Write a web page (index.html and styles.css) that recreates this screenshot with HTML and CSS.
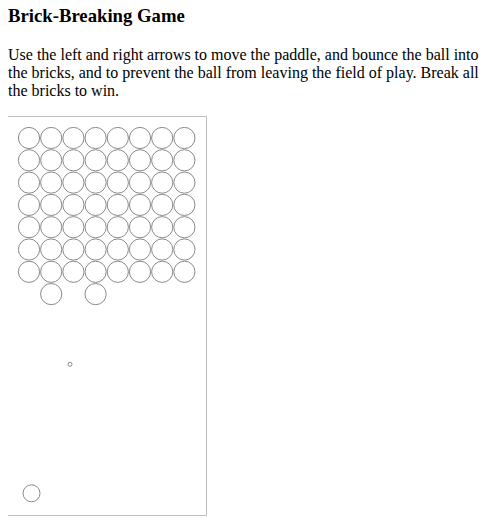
FILE: index.html
```html
<!DOCTYPE html>
<html>
<head>
<meta charset="utf-8">
<link rel="stylesheet" href="styles.css">
</head>
<body>
<h3 class="title">Brick-Breaking Game</h3>
<p class="intro">Use the left and right arrows to move the paddle, and bounce the ball into the bricks, and to prevent the ball from leaving the field of play. Break all the bricks to win.</p>
<svg class="field" width="198" height="398" viewBox="0 0 198 398">
  <g class="bricks">
    <circle cx="21" cy="21" r="10.6"/><circle cx="43.2" cy="21" r="10.6"/><circle cx="65.4" cy="21" r="10.6"/><circle cx="87.6" cy="21" r="10.6"/><circle cx="109.8" cy="21" r="10.6"/><circle cx="132" cy="21" r="10.6"/><circle cx="154.2" cy="21" r="10.6"/><circle cx="176.4" cy="21" r="10.6"/>
    <circle cx="21" cy="43.3" r="10.6"/><circle cx="43.2" cy="43.3" r="10.6"/><circle cx="65.4" cy="43.3" r="10.6"/><circle cx="87.6" cy="43.3" r="10.6"/><circle cx="109.8" cy="43.3" r="10.6"/><circle cx="132" cy="43.3" r="10.6"/><circle cx="154.2" cy="43.3" r="10.6"/><circle cx="176.4" cy="43.3" r="10.6"/>
    <circle cx="21" cy="65.6" r="10.6"/><circle cx="43.2" cy="65.6" r="10.6"/><circle cx="65.4" cy="65.6" r="10.6"/><circle cx="87.6" cy="65.6" r="10.6"/><circle cx="109.8" cy="65.6" r="10.6"/><circle cx="132" cy="65.6" r="10.6"/><circle cx="154.2" cy="65.6" r="10.6"/><circle cx="176.4" cy="65.6" r="10.6"/>
    <circle cx="21" cy="87.9" r="10.6"/><circle cx="43.2" cy="87.9" r="10.6"/><circle cx="65.4" cy="87.9" r="10.6"/><circle cx="87.6" cy="87.9" r="10.6"/><circle cx="109.8" cy="87.9" r="10.6"/><circle cx="132" cy="87.9" r="10.6"/><circle cx="154.2" cy="87.9" r="10.6"/><circle cx="176.4" cy="87.9" r="10.6"/>
    <circle cx="21" cy="110.2" r="10.6"/><circle cx="43.2" cy="110.2" r="10.6"/><circle cx="65.4" cy="110.2" r="10.6"/><circle cx="87.6" cy="110.2" r="10.6"/><circle cx="109.8" cy="110.2" r="10.6"/><circle cx="132" cy="110.2" r="10.6"/><circle cx="154.2" cy="110.2" r="10.6"/><circle cx="176.4" cy="110.2" r="10.6"/>
    <circle cx="21" cy="132.5" r="10.6"/><circle cx="43.2" cy="132.5" r="10.6"/><circle cx="65.4" cy="132.5" r="10.6"/><circle cx="87.6" cy="132.5" r="10.6"/><circle cx="109.8" cy="132.5" r="10.6"/><circle cx="132" cy="132.5" r="10.6"/><circle cx="154.2" cy="132.5" r="10.6"/><circle cx="176.4" cy="132.5" r="10.6"/>
    <circle cx="21" cy="154.8" r="10.6"/><circle cx="43.2" cy="154.8" r="10.6"/><circle cx="65.4" cy="154.8" r="10.6"/><circle cx="87.6" cy="154.8" r="10.6"/><circle cx="109.8" cy="154.8" r="10.6"/><circle cx="132" cy="154.8" r="10.6"/><circle cx="154.2" cy="154.8" r="10.6"/><circle cx="176.4" cy="154.8" r="10.6"/>
    <circle cx="43.2" cy="177.1" r="10.6"/><circle cx="87.6" cy="177.1" r="10.6"/>
  </g>
  <circle class="ball" cx="62" cy="247.3" r="2"/>
  <circle class="paddle" cx="23.5" cy="376.3" r="8.5"/>
</svg>
</body>
</html>
```

FILE: styles.css
```css
body {
  margin: 5px 8px 8px 8px;
  font-family: "Liberation Serif", "Times New Roman", serif;
  font-size: 16px;
  color: #000;
  background: #fff;
}
.title {
  font-size: 18.72px;
  font-weight: bold;
  margin: 0 0 18.72px 0;
}
.intro {
  margin: 16px 0;
}
.field {
  display: block;
  margin-left: -1px;
  border: 1px solid #bdbdbd;
}
.field circle {
  fill: none;
  stroke: #8a8a8a;
  stroke-width: 1;
}
```
